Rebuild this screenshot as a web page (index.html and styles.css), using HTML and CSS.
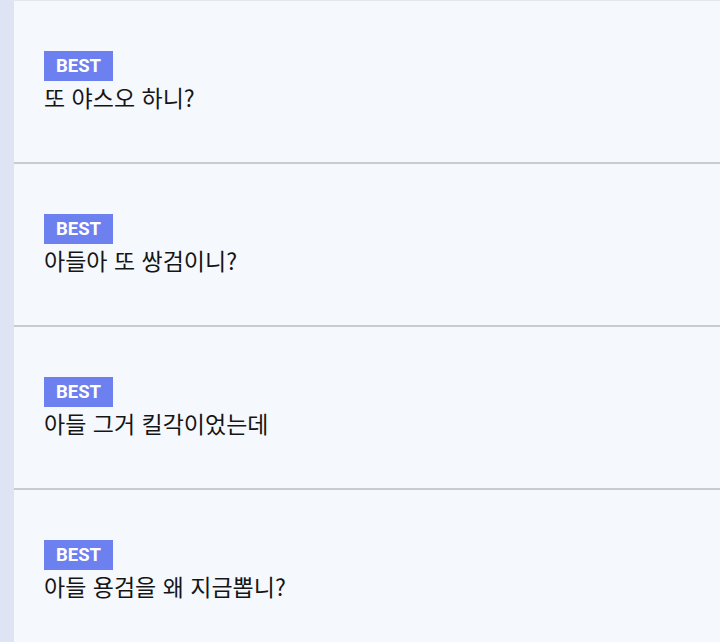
FILE: index.html
```html
<!DOCTYPE html>
<html lang="ko">
<head>
<meta charset="utf-8">
<link rel="stylesheet" href="styles.css">
</head>
<body>
<ul class="list">
  <li class="item"><span class="badge">BEST</span><p class="title">또 야스오 하니?</p></li>
  <li class="item"><span class="badge">BEST</span><p class="title">아들아 또 쌍검이니?</p></li>
  <li class="item"><span class="badge">BEST</span><p class="title">아들 그거 킬각이었는데</p></li>
  <li class="item"><span class="badge">BEST</span><p class="title">아들 용검을 왜 지금뽑니?</p></li>
</ul>
</body>
</html>
```
FILE: styles.css
```css
html, body {
  margin: 0;
  padding: 0;
  background: #f5f8fd;
}
.list {
  list-style: none;
  margin: 0;
  padding: 0;
  border-top: 1px solid #e3e6ec;
  border-left: 14px solid #dfe4f5;
  min-height: 641px;
}
.item {
  border-bottom: 2px solid #c9cbce;
  padding: 50px 0 0 30px;
  box-sizing: border-box;
  height: 163px;
}
.badge {
  display: inline-block;
  background: #6d80ef;
  color: #fff;
  font-family: Roboto, sans-serif;
  font-weight: 700;
  font-size: 18.5px;
  line-height: 30px;
  height: 30px;
  padding: 0 12px;
}
.title {
  margin: 0;
  margin-top: 1px;
  font-family: "Noto Sans CJK KR", "Noto Sans", sans-serif;
  font-size: 23px;
  line-height: 30px;
  color: #151515;
}
```
